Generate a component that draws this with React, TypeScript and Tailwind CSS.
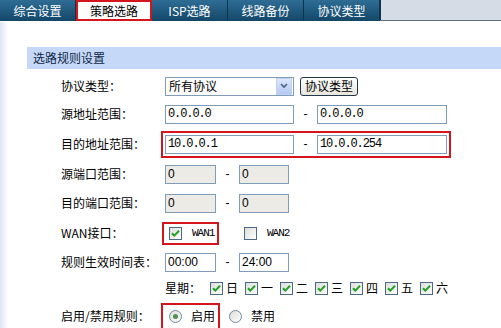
import React from "react";

const cjk = { fontFamily: '"Noto Sans CJK SC", "Noto Sans", sans-serif' };
const mono = { fontFamily: '"Liberation Mono", "DejaVu Sans Mono", monospace', fontSize: "12px", letterSpacing: "-1.1px" };
const wan = { fontFamily: '"Liberation Mono", "DejaVu Sans Mono", monospace', fontSize: "11px", letterSpacing: "-1px" };
const sans = { fontFamily: '"Liberation Sans", Arial, sans-serif' };

const tabs = ["综合设置", "策略选路", "ISP选路", "线路备份", "协议类型"];
const days = ["日", "一", "二", "三", "四", "五", "六"];

const Check = ({ on = true }: { on?: boolean }) => (
  <svg width="13" height="13" viewBox="0 0 13 13" className="shrink-0">
    <defs>
      <linearGradient id="cbg" x1="0" y1="0" x2="1" y2="1">
        <stop offset="0" stopColor="#dcdcd7" />
        <stop offset="1" stopColor="#ffffff" />
      </linearGradient>
    </defs>
    <rect x="0.5" y="0.5" width="12" height="12" fill="url(#cbg)" stroke="#4b6a86" />
    {on && <path d="M3 6.2 L5.3 8.6 L10 3.8" fill="none" stroke="#21a121" strokeWidth="2" />}
  </svg>
);

const Radio = ({ on = false }: { on?: boolean }) => (
  <svg width="13" height="13" viewBox="0 0 13 13" className="shrink-0">
    <defs>
      <linearGradient id="rbg" x1="0" y1="0" x2="1" y2="1">
        <stop offset="0" stopColor="#dcdcd7" />
        <stop offset="1" stopColor="#ffffff" />
      </linearGradient>
    </defs>
    <circle cx="6.5" cy="6.5" r="6" fill="url(#rbg)" stroke="#6f8aa3" />
    {on && <circle cx="6.5" cy="6.5" r="2.5" fill="#4f8f4f" />}
  </svg>
);

const Field = ({ w, value, gray, font }: { w: string; value: string; gray?: boolean; font?: React.CSSProperties }) => (
  <div
    className={`${w} h-[19px] border border-[#7f9db9] flex items-center pl-[2px] text-[12px] text-black ${gray ? "bg-[#ecebe6]" : "bg-white"}`}
    style={font ?? sans}
  >
    {value}
  </div>
);

const Dash = ({ w }: { w: string }) => (
  <div className={`${w} text-center text-[12px] text-black`} style={sans}>
    -
  </div>
);

const Row = ({ label, h, children }: { label: string; h: string; children: React.ReactNode }) => (
  <div className={`flex items-center ${h}`}>
    <div className="w-[104px] pl-[61px] box-content text-[12px] text-black whitespace-nowrap" style={cjk}>
      {label}
    </div>
    <div className="flex items-center">{children}</div>
  </div>
);

export default function App() {
  return (
    <div className="w-[501px] h-[328px] overflow-hidden bg-white relative" style={cjk}>
      <div className="flex h-[21px] bg-[#d6dce6] border-b border-[#5d6f80]">
        {tabs.map((t, i) =>
          i === 1 ? (
            <div key={t} className="w-[76px] h-[21px] bg-white border-2 border-[#d4151c] flex items-center justify-center text-[12px] text-black">
              {t}
            </div>
          ) : (
            <div
              key={t}
              className="w-[76px] h-[21px] bg-gradient-to-b from-[#2f6d95] to-[#134769] border-r border-[#0c3550] flex items-center justify-center text-[12px] text-white"
            >
              {t}
            </div>
          )
        )}
        <div className="w-px bg-[#0c3550]" />
      </div>

      <div className="absolute left-0 top-[22px] bottom-0 w-[8px] bg-gradient-to-r from-[#dbe6f3] to-white" />

      <div className="relative pt-[26px]">
        <div className="ml-[27px] h-[22px] bg-[#c5d8f8] flex items-center pl-[6px] text-[12px] text-[#102848]">
          选路规则设置
        </div>

        <div className="mt-[3px]">
          <Row label="协议类型：" h="h-[28px]">
            <div className="w-[129px] h-[19px] border border-[#7f9db9] bg-white flex items-center justify-between">
              <span className="pl-[3px] text-[12px]">所有协议</span>
              <div className="w-[16px] h-[17px] mr-px bg-gradient-to-b from-[#dbe6fc] to-[#b5c9f3] border border-[#c2d2ef] flex items-center justify-center">
                <svg width="8" height="6" viewBox="0 0 8 6">
                  <path d="M1 1 L4 4 L7 1" fill="none" stroke="#4d6185" strokeWidth="1.6" />
                </svg>
              </div>
            </div>
            <div className="ml-[6px] h-[19px] px-[4px] rounded-[3px] border border-[#24364b] bg-gradient-to-b from-white to-[#e6e6dc] flex items-center text-[12px]">
              协议类型
            </div>
          </Row>

          <Row label="源地址范围：" h="h-[28px]">
            <Field w="w-[129px]" value="0.0.0.0" font={mono} />
            <Dash w="w-[23px]" />
            <Field w="w-[130px]" value="0.0.0.0" font={mono} />
          </Row>

          <Row label="目的地址范围：" h="h-[32px]">
            <div className="-ml-[4px] h-[27px] border-2 border-[#d4151c] flex items-center px-[2px]">
              <Field w="w-[129px]" value="10.0.0.1" font={mono} />
              <Dash w="w-[23px]" />
              <Field w="w-[130px]" value="10.0.0.254" font={mono} />
            </div>
          </Row>

          <Row label="源端口范围：" h="h-[28px]">
            <Field w="w-[51px]" value="0" gray />
            <Dash w="w-[23px]" />
            <Field w="w-[50px]" value="0" gray />
          </Row>

          <Row label="目的端口范围：" h="h-[30px]">
            <Field w="w-[51px]" value="0" gray />
            <Dash w="w-[23px]" />
            <Field w="w-[50px]" value="0" gray />
          </Row>

          <Row label="WAN接口：" h="h-[30px]">
            <div className="-ml-[3px] h-[23px] w-[57px] border-2 border-[#d4151c] flex items-center pl-[5px]">
              <Check />
              <span className="ml-[10px]" style={wan}>WAN1</span>
            </div>
            <div className="ml-[25px] flex items-center">
              <Check on={false} />
              <span className="ml-[10px]" style={wan}>WAN2</span>
            </div>
          </Row>

          <Row label="规则生效时间表：" h="h-[28px]">
            <Field w="w-[51px]" value="00:00" />
            <Dash w="w-[23px]" />
            <Field w="w-[50px]" value="24:00" />
          </Row>

          <div className="flex items-center h-[24px] pl-[165px]">
            <span className="text-[12px] w-[45px]">星期：</span>
            {days.map((d) => (
              <div key={d} className="flex items-center w-[35px]">
                <Check />
                <span className="ml-[3px] text-[12px]">{d}</span>
              </div>
            ))}
          </div>

          <Row label="启用/禁用规则：" h="h-[32px]">
            <div className="-ml-[4px] h-[27px] w-[59px] border-2 border-[#d4151c] flex items-center pl-[6px]">
              <Radio on />
              <span className="ml-[9px] text-[12px]">启用</span>
            </div>
            <div className="ml-[9px] flex items-center">
              <Radio />
              <span className="ml-[9px] text-[12px]">禁用</span>
            </div>
          </Row>
        </div>
      </div>
    </div>
  );
}
